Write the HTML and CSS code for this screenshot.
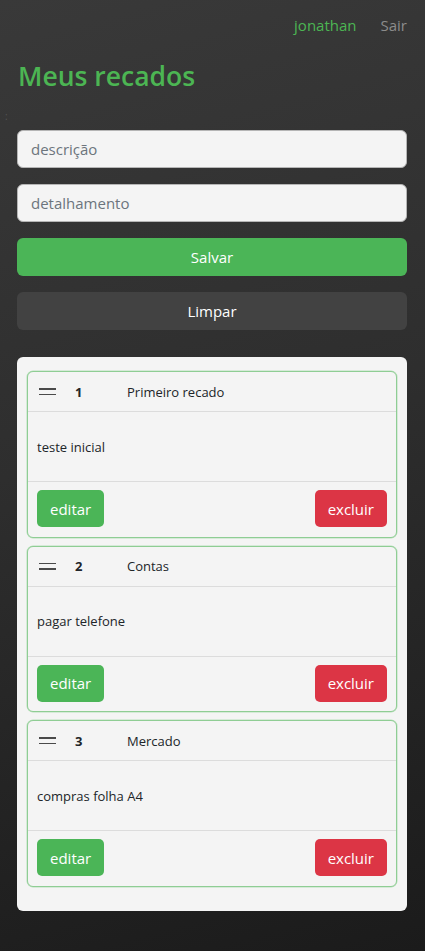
FILE: index.html
```html
<!DOCTYPE html>
<html lang="pt-BR">
<head>
<meta charset="utf-8">
<title>Meus recados</title>
<link rel="stylesheet" href="styles.css">
</head>
<body>
<nav class="nav">
  <a class="nav-user" href="#">jonathan</a>
  <a class="nav-exit" href="#">Sair</a>
</nav>
<main class="page">
  <h1 class="title">Meus recados</h1>
  <div class="stray">:</div>
  <form class="form">
    <input class="field" type="text" placeholder="descrição">
    <input class="field" type="text" placeholder="detalhamento">
    <button class="btn btn-save" type="button">Salvar</button>
    <button class="btn btn-clear" type="button">Limpar</button>
  </form>
  <section class="list">
    <article class="card">
      <header class="card-head">
        <span class="grip"><span></span><span></span></span>
        <span class="num">1</span>
        <span class="desc">Primeiro recado</span>
      </header>
      <div class="card-body">teste inicial</div>
      <footer class="card-foot">
        <button class="small-btn edit" type="button">editar</button>
        <button class="small-btn del" type="button">excluir</button>
      </footer>
    </article>
    <article class="card">
      <header class="card-head">
        <span class="grip"><span></span><span></span></span>
        <span class="num">2</span>
        <span class="desc">Contas</span>
      </header>
      <div class="card-body">pagar telefone</div>
      <footer class="card-foot">
        <button class="small-btn edit" type="button">editar</button>
        <button class="small-btn del" type="button">excluir</button>
      </footer>
    </article>
    <article class="card">
      <header class="card-head">
        <span class="grip"><span></span><span></span></span>
        <span class="num">3</span>
        <span class="desc">Mercado</span>
      </header>
      <div class="card-body">compras folha A4</div>
      <footer class="card-foot">
        <button class="small-btn edit" type="button">editar</button>
        <button class="small-btn del" type="button">excluir</button>
      </footer>
    </article>
  </section>
</main>
</body>
</html>
```
FILE: styles.css
```css
* { box-sizing: border-box; }
html, body { margin: 0; padding: 0; }
body {
  min-height: 951px;
  background: linear-gradient(165deg, #393939 0%, #2e2e2e 45%, #1b1b1b 100%);
  font-family: "Open Sans", "Noto Sans", sans-serif;
  color: #212529;
}
.nav {
  display: flex;
  justify-content: flex-end;
  gap: 24px;
  padding: 13px 18px 0 0;
  height: 37px;
  font-size: 15px;
  line-height: 24px;
}
.nav a { text-decoration: none; }
.nav-user { color: #4cb553; }
.nav-exit { color: #8c8c8c; }
.page { padding: 0 18px 40px 17px; }
.title {
  margin: 21px 0 0 1px;
  font-size: 26.5px;
  line-height: 36px;
  font-weight: 600;
  color: #4cb553;
}
.stray {
  margin-left: -12px;
  height: 12px;
  margin-top: 16px;
  font-size: 10px;
  line-height: 12px;
  color: #555;
}
.form {
  display: flex;
  flex-direction: column;
  gap: 16px;
  margin-top: 8px;
}
.field {
  height: 38px;
  border: 1px solid #b5b5b5;
  border-radius: 6px;
  background: #f4f4f4;
  padding: 0 13px;
  font-family: inherit;
  font-size: 15px;
  color: #333;
}
.field::placeholder { color: #6c757d; }
.btn {
  height: 38px;
  border: 0;
  border-radius: 6px;
  font-family: inherit;
  font-size: 15px;
  color: #fff;
}
.btn-save { background: #4bb557; }
.btn-clear { background: #424242; }
.list {
  margin-top: 27px;
  background: #f4f4f4;
  border-radius: 6px;
  padding: 14px 10px 24px;
  display: flex;
  flex-direction: column;
  gap: 8px;
}
.card {
  border: 1px solid #8fcd94;
  border-radius: 6px;
  background: #f4f4f4;
  box-shadow: 0 0 0 0.5px #b8e0bb;
}
.card-head {
  display: flex;
  align-items: center;
  height: 40px;
  padding: 0 0 0 11px;
  border-bottom: 1px solid #dcdcdc;
  font-size: 13px;
}
.grip {
  display: flex;
  flex-direction: column;
  gap: 4px;
  width: 17px;
}
.grip span {
  display: block;
  height: 1.5px;
  background: #4a4a4a;
}
.num {
  margin-left: 19px;
  width: 52px;
  font-weight: 700;
}
.card-body {
  height: 70px;
  display: flex;
  align-items: center;
  padding: 0 9px;
  font-size: 13px;
  border-bottom: 1px solid #dcdcdc;
}
.card-foot {
  display: flex;
  justify-content: space-between;
  padding: 8px 9px 9.5px;
}
.small-btn {
  height: 37px;
  border: 0;
  border-radius: 5px;
  padding: 0 13px;
  font-family: inherit;
  font-size: 15px;
  color: #fff;
}
.edit { background: #4bb557; }
.del { background: #dc3545; }
```
